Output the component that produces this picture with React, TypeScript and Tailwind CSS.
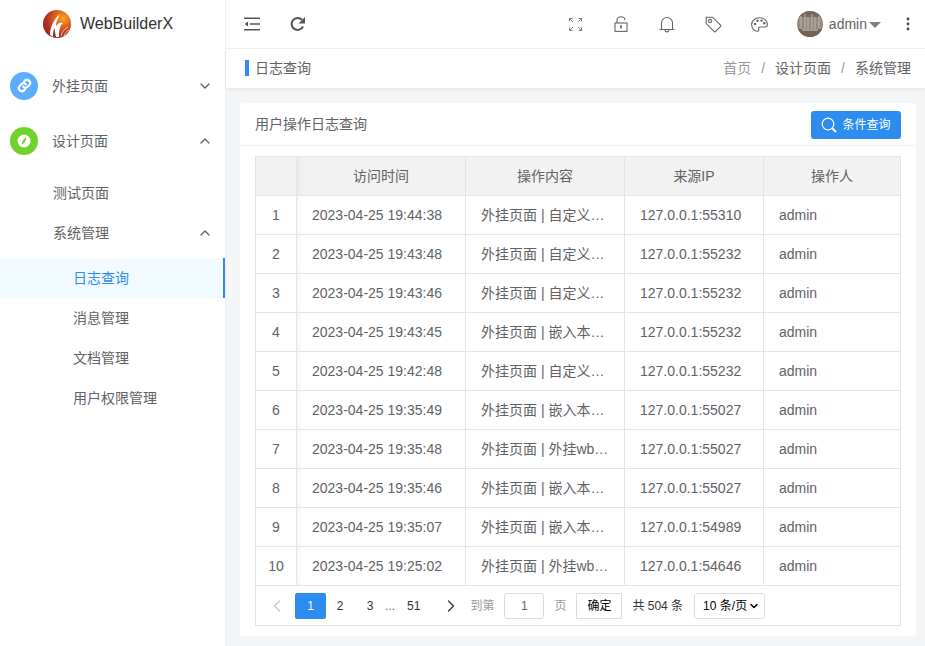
import { ChevronDown, ChevronLeft, ChevronRight, ChevronUp } from 'lucide-react'

type LogRow = {
  time: string
  action: string
  ip: string
}

const rows: LogRow[] = [
  { time: '2023-04-25 19:44:38', action: '外挂页面 | 自定义…', ip: '127.0.0.1:55310' },
  { time: '2023-04-25 19:43:48', action: '外挂页面 | 自定义…', ip: '127.0.0.1:55232' },
  { time: '2023-04-25 19:43:46', action: '外挂页面 | 自定义…', ip: '127.0.0.1:55232' },
  { time: '2023-04-25 19:43:45', action: '外挂页面 | 嵌入本…', ip: '127.0.0.1:55232' },
  { time: '2023-04-25 19:42:48', action: '外挂页面 | 自定义…', ip: '127.0.0.1:55232' },
  { time: '2023-04-25 19:35:49', action: '外挂页面 | 嵌入本…', ip: '127.0.0.1:55027' },
  { time: '2023-04-25 19:35:48', action: '外挂页面 | 外挂wb…', ip: '127.0.0.1:55027' },
  { time: '2023-04-25 19:35:46', action: '外挂页面 | 嵌入本…', ip: '127.0.0.1:55027' },
  { time: '2023-04-25 19:35:07', action: '外挂页面 | 嵌入本…', ip: '127.0.0.1:54989' },
  { time: '2023-04-25 19:25:02', action: '外挂页面 | 外挂wb…', ip: '127.0.0.1:54646' },
]

function Logo() {
  return (
    <svg width="28" height="28" viewBox="0 0 28 28">
      <defs>
        <radialGradient id="logoFill" cx="0.72" cy="0.3" r="0.85">
          <stop offset="0" stopColor="#f7a51e" />
          <stop offset="0.35" stopColor="#e0621f" />
          <stop offset="0.7" stopColor="#b1301f" />
          <stop offset="1" stopColor="#8c2a20" />
        </radialGradient>
      </defs>
      <circle cx="14" cy="14" r="14" fill="url(#logoFill)" />
      <path d="M7 25 C7 18 10 10 17 4 C14 10 13 13 13 16 C15 13 17 12 20 13 C17 15 16 20 16 27 L13 27 C12 23 12 21 12 18 C10 20 10 23 10 27 Z" fill="#fff" />
      <path d="M18 26 C19 22 21 19 25 17 M21 26 C22 23 24 21 26 20" stroke="#f1cfc4" strokeWidth="0.9" fill="none" />
    </svg>
  )
}

function Avatar() {
  return (
    <svg width="26" height="26" viewBox="0 0 26 26" className="ml-[29px] rounded-full">
      <rect width="26" height="26" fill="#94897f" />
      <rect width="26" height="6" fill="#75675e" />
      <path d="M4 5v13M8 3v15M11 6v12M15 3v15M18 6v12M22 5v13" stroke="#bdb8b3" strokeWidth="1" />
      <rect y="18" width="26" height="8" fill="#75604f" />
      <rect y="18" x="5" width="16" height="2" fill="#a59c92" />
    </svg>
  )
}

function Expand() {
  return (
    <svg width="13" height="13" viewBox="0 0 13 13" fill="none" stroke="#808080" strokeWidth="1">
      <path d="M.5 3.5v-3h3M.5.5l3.500 3.500M9.500.5h3v3M12.500.5L9 4M.5 9.500v3h3M.5 12.500L4 9M12.500 9.500v3h-3M12.500 12.500L9 9" />
    </svg>
  )
}

function Fold() {
  return (
    <svg width="16" height="14" viewBox="0 0 16 14" fill="none" stroke="#555" strokeWidth="1.6">
      <path d="M0 1.2h16M0 12.800h16M6 7h10" />
      <path d="M4 4.500v5L.5 7z" fill="#555" stroke="none" />
    </svg>
  )
}

function Refresh() {
  return (
    <svg width="16" height="16" viewBox="0 0 16 16" fill="none" className="ml-[30px]">
      <path d="M13 10.500A6 6 0 1 1 12 3.800" stroke="#555" strokeWidth="2" />
      <path d="M15 1v6.400H8.600z" fill="#555" />
    </svg>
  )
}

function LockOpen() {
  return (
    <svg width="14" height="16" viewBox="0 0 14 16" fill="none" stroke="#666" strokeWidth="1.1" className="ml-[32px]">
      <path d="M3 7V4.300a4 3.600 0 0 1 8 0" />
      <rect x="1" y="7" width="12" height="8.400" />
      <path d="M7 10v2.500" strokeWidth="1.6" />
      <circle cx="7" cy="10" r="0.9" fill="#666" stroke="none" />
    </svg>
  )
}

function BellIcon() {
  return (
    <svg width="16" height="17" viewBox="0 0 16 17" fill="none" stroke="#666" strokeWidth="1.1" className="ml-[31px]">
      <path d="M.5 13.500h15M2.500 13.500V7a5.500 5.500 0 0 1 11 0v6.500" />
      <path d="M6 13.500a2 2.400 0 0 0 4 0" />
    </svg>
  )
}

function TagIcon() {
  return (
    <svg width="17" height="17" viewBox="0 0 17 17" fill="none" stroke="#666" strokeWidth="1.1" className="ml-[30px]">
      <path d="M1.2 1.2h6.400l8 8a1 1 0 0 1 0 1.300l-5.100 5.100a1 1 0 0 1-1.300 0l-8-8z" />
      <circle cx="5" cy="5" r="1.6" />
    </svg>
  )
}

function PaletteIcon() {
  return (
    <svg width="17" height="15" viewBox="0 0 17 15" fill="none" stroke="#666" strokeWidth="1.1" className="ml-[29px]">
      <path d="M8.500.7C4 .7.6 3.800.6 7.700c0 3.600 2.800 6.600 5.600 6.600 1.500 0 1.900-1 1.500-2-.5-1.300.2-2.300 1.700-2.300h4.300c1.900 0 2.700-1 2.700-2.500C16.400 3.600 13 .7 8.500.7z" />
      <circle cx="4" cy="7" r="1.2" fill="#666" stroke="none" />
      <circle cx="6.500" cy="3.800" r="1.2" fill="#666" stroke="none" />
      <circle cx="10.500" cy="3.600" r="1.2" fill="#666" stroke="none" />
      <circle cx="13.300" cy="6.300" r="1.2" fill="#666" stroke="none" />
    </svg>
  )
}

function Dots() {
  return (
    <svg width="4" height="14" viewBox="0 0 4 14" fill="#444" className="ml-[25px]">
      <circle cx="2" cy="2" r="1.4" />
      <circle cx="2" cy="7" r="1.4" />
      <circle cx="2" cy="12" r="1.4" />
    </svg>
  )
}

function SearchIcon() {
  return (
    <svg width="16" height="16" viewBox="0 0 16 16" fill="none" stroke="#fff" className="mr-[5px]">
      <circle cx="7" cy="7" r="5.800" strokeWidth="1.2" />
      <path d="M11.300 11.300L15 15" strokeWidth="2" />
    </svg>
  )
}

function SideIcon({ color, children }: { color: string; children: React.ReactNode }) {
  return (
    <span className="flex h-7 w-7 items-center justify-center rounded-full" style={{ backgroundColor: color }}>
      {children}
    </span>
  )
}

function Sidebar() {
  return (
    <aside className="flex w-[226px] shrink-0 flex-col border-r border-[#eef0f3] bg-white text-sm text-[#606266]">
      <div className="flex h-12 items-center pl-[43px]">
        <Logo />
        <span className="ml-[9px] text-base text-[#303133]">WebBuilderX</span>
      </div>
      <div className="mt-[10px] flex h-[55px] items-center pl-[10px] pr-[12px]">
        <SideIcon color="#5cadff">
          <svg width="15" height="15" viewBox="0 0 24 24" fill="none" stroke="#fff" strokeWidth="3.6" strokeLinecap="round">
            <path d="M10 14a5 5 0 0 0 7 0l3-3a5 5 0 0 0-7-7l-1.500 1.500" />
            <path d="M14 10a5 5 0 0 0-7 0l-3 3a5 5 0 0 0 7 7l1.500-1.500" />
          </svg>
        </SideIcon>
        <span className="ml-[14px] flex-1">外挂页面</span>
        <ChevronDown size={16} strokeWidth={2} />
      </div>
      <div className="flex h-[55px] items-center pl-[10px] pr-[12px]">
        <SideIcon color="#71d22e">
          <svg width="14" height="14" viewBox="0 0 14 14">
            <circle cx="7" cy="7" r="6.500" fill="#fff" />
            <path d="M9.500 3.500 C7 4.200 5.400 6.400 4.500 10.500 C7 9.800 8.800 7.400 9.500 3.500z" fill="#71d22e" />
          </svg>
        </SideIcon>
        <span className="ml-[14px] flex-1">设计页面</span>
        <ChevronUp size={16} strokeWidth={2} />
      </div>
      <div className="mt-[5px] flex h-10 items-center pl-[53px]">测试页面</div>
      <div className="flex h-10 items-center pl-[53px] pr-[12px]">
        <span className="flex-1">系统管理</span>
        <ChevronUp size={16} strokeWidth={2} />
      </div>
      <div className="mt-[5px] flex h-10 items-center border-r-2 border-[#2d8cf0] bg-[#f0faff] pl-[73px] text-[#2d8cf0]">日志查询</div>
      <div className="flex h-10 items-center pl-[73px]">消息管理</div>
      <div className="flex h-10 items-center pl-[73px]">文档管理</div>
      <div className="flex h-10 items-center pl-[73px]">用户权限管理</div>
    </aside>
  )
}

function Topbar() {
  return (
    <header className="flex h-[49px] items-center border-b border-[#f0f1f3] bg-white pl-[18px] pr-[15px] text-[#666]">
      <Fold />
      <Refresh />
      <div className="ml-auto flex items-center">
        <Expand />
        <LockOpen />
        <BellIcon />
        <TagIcon />
        <PaletteIcon />
        <Avatar />
        <span className="ml-[6px] text-sm text-[#606266]">admin</span>
        <span className="ml-[2px] mt-[2px] h-0 w-0 border-x-[6px] border-t-[6px] border-x-transparent border-t-[#808080]" />
        <Dots />
      </div>
    </header>
  )
}

function Crumbs() {
  return (
    <div className="flex h-[39px] items-center bg-white pb-[1px] pl-[19px] pr-[14px] text-sm text-[#606266] shadow-[0_2px_4px_rgba(0,0,0,0.06)]">
      <span className="h-4 w-1 bg-[#2d8cf0]" />
      <span className="ml-[6px]">日志查询</span>
      <div className="ml-auto flex items-center">
        <span className="text-[#999]">首页</span>
        <span className="mx-[10px] text-[#999]">/</span>
        <span>设计页面</span>
        <span className="mx-[10px] text-[#999]">/</span>
        <span>系统管理</span>
      </div>
    </div>
  )
}

function LogTable() {
  const cell = 'border border-[#e4e4e4] h-[39px] px-[15px] font-normal'
  const edge = 'shadow-[inset_6px_0_6px_-5px_rgba(0,0,0,0.07)]'
  return (
    <table className="w-full table-fixed border-collapse text-left text-sm text-[#606266]">
      <colgroup>
        <col className="w-[41px]" />
        <col className="w-[169px]" />
        <col className="w-[159px]" />
        <col className="w-[139px]" />
        <col />
      </colgroup>
      <thead className="bg-[#f2f2f2]">
        <tr>
          <th className={cell} />
          <th className={`${cell} ${edge} text-center`}>访问时间</th>
          <th className={`${cell} text-center`}>操作内容</th>
          <th className={`${cell} text-center`}>来源IP</th>
          <th className={`${cell} text-center`}>操作人</th>
        </tr>
      </thead>
      <tbody>
        {rows.map((row, i) => (
          <tr key={row.time}>
            <td className={`${cell} !px-0 text-center`}>{i + 1}</td>
            <td className={`${cell} ${edge}`}>{row.time}</td>
            <td className={`${cell} whitespace-nowrap`}>{row.action}</td>
            <td className={cell}>{row.ip}</td>
            <td className={cell}>admin</td>
          </tr>
        ))}
      </tbody>
    </table>
  )
}

function Pager() {
  return (
    <div className="flex h-10 items-center border-x border-b border-[#e4e4e4] pl-[11px] text-xs text-[#333]">
      <ChevronLeft size={20} strokeWidth={1.5} className="text-[#c5c8ce]" />
      <span className="ml-[8px] flex h-[26px] w-[31px] items-center justify-center rounded-[2px] bg-[#2d8cf0] text-white">1</span>
      <span className="ml-[9px] w-[10px] text-center">2</span>
      <span className="ml-[20px] w-[10px] text-center">3</span>
      <span className="ml-[10px] text-[#666]">...</span>
      <span className="ml-[12px]">51</span>
      <ChevronRight size={20} strokeWidth={1.5} className="ml-[21px] text-[#333]" />
      <span className="ml-[9px] text-[#999]">到第</span>
      <span className="ml-[10px] flex h-[26px] w-10 items-center justify-center rounded-[3px] border border-[#dcdee2] text-[#666]">1</span>
      <span className="ml-[10px] text-[#999]">页</span>
      <span className="ml-[10px] flex h-[26px] w-[46px] items-center justify-center border border-[#dcdee2] text-black">确定</span>
      <span className="ml-[10px]">共 504 条</span>
      <span className="ml-[11px] flex h-[26px] w-[71px] items-center justify-between rounded-[3px] border border-[#dcdee2] pl-2 pr-1 text-black">
        10 条/页
        <ChevronDown size={12} strokeWidth={3} />
      </span>
    </div>
  )
}

export default function App() {
  return (
    <div className="flex h-[646px] w-[925px] overflow-hidden bg-[#f4f5f7] font-['Liberation_Sans','Noto_Sans_CJK_SC',sans-serif]">
      <Sidebar />
      <main className="flex min-w-0 flex-1 flex-col">
        <Topbar />
        <Crumbs />
        <section className="ml-[14px] mr-[9px] mt-[15px] rounded-t bg-white">
          <div className="flex h-[43px] items-center border-b border-[#f0f1f3] pl-[15px] pr-[15px]">
            <span className="text-sm text-[#606266]">用户操作日志查询</span>
            <button className="ml-auto mt-[2px] flex h-7 w-[90px] items-center justify-center rounded-[3px] bg-[#2d8cf0] text-xs text-white">
              <SearchIcon />
              条件查询
            </button>
          </div>
          <div className="px-[15px] pb-[10px] pt-[10px]">
            <LogTable />
            <Pager />
          </div>
        </section>
      </main>
    </div>
  )
}
